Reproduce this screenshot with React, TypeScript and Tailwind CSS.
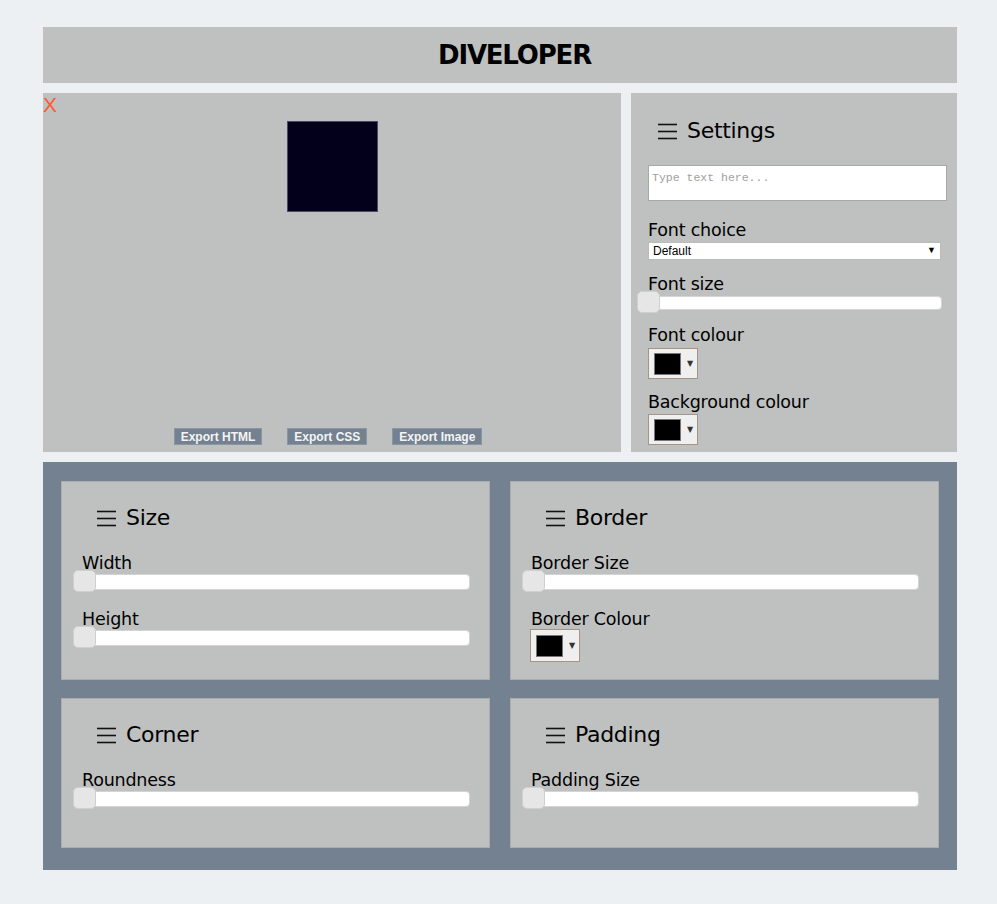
import React from "react";

const font = { fontFamily: '"DejaVu Sans", "Liberation Sans", sans-serif' };

function Burger() {
  return (
    <svg width="19" height="17" viewBox="0 0 19 17" className="shrink-0">
      <line x1="0" y1="1.5" x2="19" y2="1.5" stroke="#111" strokeWidth="1.6" />
      <line x1="0" y1="8.5" x2="19" y2="8.5" stroke="#111" strokeWidth="1.6" />
      <line x1="0" y1="15.5" x2="19" y2="15.5" stroke="#111" strokeWidth="1.6" />
    </svg>
  );
}

function Title({ text }: { text: string }) {
  return (
    <div className="flex items-center gap-[10px] h-[30px]">
      <Burger />
      <span className="text-[22px] leading-none text-black tracking-[-0.3px]">{text}</span>
    </div>
  );
}

function Label({ text }: { text: string }) {
  return <div className="text-[17.5px] leading-[20px] text-black tracking-[-0.2px]">{text}</div>;
}

// range input look: thumb sits at the left, slightly above the track
function Slider({ track = 16 }: { track?: number }) {
  return (
    <div className="relative -mt-[3px] h-[23px] flex items-center">
      <div
        className="ml-[2px] flex-1 rounded-[4px] bg-white border border-[#d4d4d4]"
        style={{ height: track }}
      />
      <div className="absolute left-0 top-0 w-[23px] h-[22px] rounded-[5px] bg-[#e6e6e6] border border-[#cfcfcf]" />
    </div>
  );
}

function Swatch({ tall = false }: { tall?: boolean }) {
  return (
    <div
      className={
        tall
          ? "w-[50px] h-[33px] bg-[#efefef] border border-[#a89484] flex items-center pl-[5px] gap-[6px]"
          : "w-[50px] h-[31px] bg-[#efefef] border border-[#a89484] flex items-center pl-[5px] gap-[6px]"
      }
    >
      <div className="w-[27px] h-[22px] bg-black border border-[#777]" />
      <span className="text-[8px] text-[#333] leading-none">▼</span>
    </div>
  );
}

function ExportButton({ text }: { text: string }) {
  return (
    <span className="bg-[#738190] px-[6px] h-[17px] leading-[16px] whitespace-nowrap border border-[#8a96a3]">
      {text}
    </span>
  );
}

export default function App() {
  return (
    <div className="min-h-screen bg-[#ecf0f3] pt-[27px] pb-[34px]" style={font}>
      <div className="ml-[43px] w-[914px] flex flex-col gap-[10px]">
        <div className="h-[56px] bg-[#bfc1c0] flex items-center justify-center pl-[29px]">
          <h1 className="text-[26px] font-bold leading-none text-black tracking-[-1.2px]">DIVELOPER</h1>
        </div>

        <div className="flex gap-[10px] h-[359px]">
          <div className="w-[578px] bg-[#bfc1c0] relative flex flex-col items-center">
            <span
              className="absolute left-[0px] top-[2px] text-[21px] leading-[20px] text-[#ff5a30]"
              style={{ fontFamily: '"Liberation Sans", sans-serif' }}
            >
              X
            </span>
            <div className="mt-[28px] w-[91px] h-[91px] bg-[#03001c] border border-[#4c4a66]" />
            <div className="mt-auto mb-[7px] pr-[8px] flex gap-[25px] text-[12px] font-bold text-[#f4f4f4]" style={{ fontFamily: '"Liberation Sans", sans-serif' }}>
              <ExportButton text="Export HTML" />
              <ExportButton text="Export CSS" />
              <ExportButton text="Export Image" />
            </div>
          </div>

          <div className="w-[326px] bg-[#bfc1c0] pl-[17px] pr-[10px] pt-[23px]">
            <div className="pl-[10px]">
              <Title text="Settings" />
            </div>
            <div className="mt-[19px] h-[36px] bg-white border border-[#a8a8a8] px-[3px] pt-[3px] text-[11.5px] text-[#a0a0a0]" style={{ fontFamily: '"Liberation Mono", monospace' }}>
              Type text here...
            </div>
            <div className="mt-[19px]">
              <Label text="Font choice" />
            </div>
            <div className="mt-[2px] w-[293px] h-[18px] bg-white border border-[#bbb] flex items-center justify-between pl-[4px] pr-[4px] text-[12px] text-black" style={{ fontFamily: '"Liberation Sans", sans-serif' }}>
              <span>Default</span>
              <span className="text-[9px]">▼</span>
            </div>
            <div className="mt-[14px]">
              <Label text="Font size" />
            </div>
            <div className="-ml-[11px] w-[305px]">
              <Slider track={14} />
            </div>
            <div className="mt-[11px]">
              <Label text="Font colour" />
            </div>
            <div className="mt-[3px]">
              <Swatch />
            </div>
            <div className="mt-[13px]">
              <Label text="Background colour" />
            </div>
            <div className="mt-[2px]">
              <Swatch />
            </div>
          </div>
        </div>

        <div className="bg-[#738190] pt-[19px] pb-[22px] px-[18px] grid grid-cols-2 gap-x-[20px] gap-y-[18px]">
          <div className="h-[199px] bg-[#bfc1c0] border border-[#a9adb0] pt-[21px] pl-[11px] pr-[19px]">
            <div className="pl-[24px]"><Title text="Size" /></div>
            <div className="mt-[20px] pl-[9px]"><Label text="Width" /></div>
            <Slider />
            <div className="mt-[16px] pl-[9px]"><Label text="Height" /></div>
            <Slider />
          </div>
          <div className="h-[199px] bg-[#bfc1c0] border border-[#a9adb0] pt-[21px] pl-[11px] pr-[19px]">
            <div className="pl-[24px]"><Title text="Border" /></div>
            <div className="mt-[20px] pl-[9px]"><Label text="Border Size" /></div>
            <Slider />
            <div className="mt-[16px] pl-[9px]"><Label text="Border Colour" /></div>
            <div className="mt-[0px] pl-[8px]"><Swatch tall /></div>
          </div>
          <div className="h-[150px] bg-[#bfc1c0] border border-[#a9adb0] pt-[21px] pl-[11px] pr-[19px]">
            <div className="pl-[24px]"><Title text="Corner" /></div>
            <div className="mt-[20px] pl-[9px]"><Label text="Roundness" /></div>
            <Slider />
          </div>
          <div className="h-[150px] bg-[#bfc1c0] border border-[#a9adb0] pt-[21px] pl-[11px] pr-[19px]">
            <div className="pl-[24px]"><Title text="Padding" /></div>
            <div className="mt-[20px] pl-[9px]"><Label text="Padding Size" /></div>
            <Slider />
          </div>
        </div>
      </div>
    </div>
  );
}
